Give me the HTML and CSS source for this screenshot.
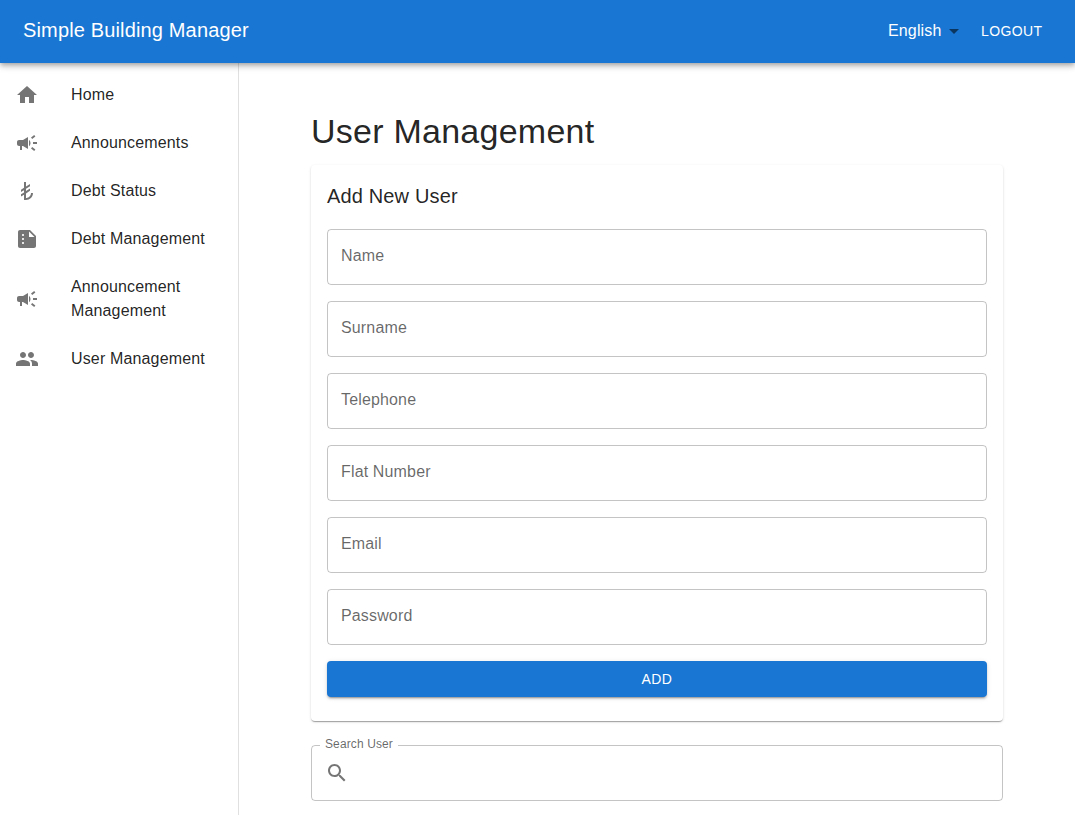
FILE: index.html
```html
<!DOCTYPE html>
<html lang="en">
<head>
<meta charset="utf-8">
<title>Simple Building Manager</title>
<link rel="stylesheet" href="styles.css">
</head>
<body>
<header class="appbar">
  <div class="brand">Simple Building Manager</div>
  <div class="language"><span class="language-label">English</span><svg class="icon arrow" viewBox="0 0 24 24"><path d="M7 10l5 5 5-5z"/></svg></div>
  <button class="logout">LOGOUT</button>
</header>
<div class="layout">
  <nav class="sidebar">
    <a class="item"><svg class="icon" viewBox="0 0 24 24"><path d="M10 20v-6h4v6h5v-8h3L12 3 2 12h3v8z"/></svg><span class="label">Home</span></a>
    <a class="item"><svg class="icon" viewBox="0 0 24 24"><path d="M18 11v2h4v-2h-4zM16 17.61c.96.71 2.21 1.65 3.2 2.39.4-.53.8-1.07 1.2-1.6-.99-.74-2.24-1.68-3.2-2.4-.4.54-.8 1.08-1.2 1.61zM20.4 5.6c-.4-.53-.8-1.07-1.2-1.6-.99.74-2.24 1.68-3.2 2.4.4.53.8 1.07 1.2 1.6.96-.72 2.21-1.65 3.2-2.4zM4 9c-1.1 0-2 .9-2 2v2c0 1.100.9 2 2 2h1v4h2v-4h1l5 3V6L8 9H4zM15.500 12c0-1.330-.580-2.530-1.500-3.350v6.690c.920-.810 1.500-2.010 1.500-3.340z"/></svg><span class="label">Announcements</span></a>
    <a class="item"><svg class="icon" viewBox="0 0 24 24"><path d="M9 8.760V3h2v4.510L15 5v2.360l-4 2.510v2.150l4-2.510v2.360l-4 2.510V19c2.760 0 5-2.240 5-5h2c0 3.870-3.130 7-7 7H9v-5.260l-3 1.880v-2.360l3-1.880v-2.250l-3 1.880v-2.360z"/></svg><span class="label">Debt Status</span></a>
    <a class="item"><svg class="icon" viewBox="0 0 24 24"><path d="M15 3H5c-1.100 0-1.990.9-1.990 2L3 19c0 1.100.890 2 1.990 2H19c1.100 0 2-.9 2-2V9l-6-6zM8 17c-.550 0-1-.450-1-1s.450-1 1-1 1 .450 1 1-.450 1-1 1zm0-4c-.550 0-1-.450-1-1s.450-1 1-1 1 .450 1 1-.450 1-1 1zm0-4c-.550 0-1-.450-1-1s.450-1 1-1 1 .450 1 1-.450 1-1 1zm6 1V4.500l5.500 5.500H14z"/></svg><span class="label">Debt Management</span></a>
    <a class="item"><svg class="icon" viewBox="0 0 24 24"><path d="M18 11v2h4v-2h-4zM16 17.61c.96.71 2.21 1.65 3.2 2.39.4-.53.8-1.07 1.2-1.6-.99-.74-2.24-1.68-3.2-2.4-.4.54-.8 1.08-1.2 1.61zM20.4 5.6c-.4-.53-.8-1.07-1.2-1.6-.99.74-2.24 1.68-3.2 2.4.4.53.8 1.07 1.2 1.6.96-.72 2.21-1.65 3.2-2.4zM4 9c-1.1 0-2 .9-2 2v2c0 1.100.9 2 2 2h1v4h2v-4h1l5 3V6L8 9H4zM15.500 12c0-1.330-.580-2.530-1.500-3.350v6.690c.920-.810 1.500-2.010 1.500-3.340z"/></svg><span class="label">Announcement Management</span></a>
    <a class="item"><svg class="icon" viewBox="0 0 24 24"><path d="M16 11c1.660 0 2.990-1.340 2.990-3S17.660 5 16 5c-1.660 0-3 1.340-3 3s1.340 3 3 3zm-8 0c1.660 0 2.990-1.340 2.990-3S9.660 5 8 5C6.340 5 5 6.340 5 8s1.340 3 3 3zm0 2c-2.330 0-7 1.170-7 3.500V19h14v-2.500c0-2.330-4.670-3.500-7-3.500zm8 0c-.290 0-.620.020-.970.050 1.160.840 1.970 1.970 1.970 3.450V19h6v-2.500c0-2.330-4.670-3.500-7-3.500z"/></svg><span class="label">User Management</span></a>
  </nav>
  <main class="content">
    <h1 class="title">User Management</h1>
    <section class="card">
      <h2 class="subtitle">Add New User</h2>
      <div class="field">Name</div>
      <div class="field">Surname</div>
      <div class="field">Telephone</div>
      <div class="field">Flat Number</div>
      <div class="field">Email</div>
      <div class="field">Password</div>
      <button class="add">ADD</button>
    </section>
    <fieldset class="search">
      <legend class="legend">Search User</legend>
      <svg class="icon" viewBox="0 0 24 24"><path d="M15.500 14h-.790l-.280-.270C15.410 12.590 16 11.110 16 9.500 16 5.910 13.090 3 9.500 3S3 5.910 3 9.500 5.910 16 9.500 16c1.610 0 3.090-.590 4.230-1.570l.270.280v.790l5 4.990L20.490 19l-4.990-5zm-6 0C7.010 14 5 11.990 5 9.500S7.010 5 9.500 5 14 7.010 14 9.500 11.990 14 9.500 14z"/></svg>
    </fieldset>
  </main>
</div>
</body>
</html>
```
FILE: styles.css
```css
* { box-sizing: border-box; }
body {
  margin: 0;
  height: 815px;
  overflow: hidden;
  display: flex;
  flex-direction: column;
  background: #fff;
  color: rgba(0, 0, 0, 0.87);
  font: 400 16px/24px "Liberation Sans", Arial, sans-serif;
  letter-spacing: 0.15px;
}
.icon { width: 24px; height: 24px; flex: none; fill: rgba(0, 0, 0, 0.54); }
.appbar {
  position: relative;
  flex: none;
  height: 63px;
  padding: 0 24px 2px 23px;
  display: flex;
  align-items: center;
  background: #1976d2;
  color: #fff;
  box-shadow: 0 2px 4px -1px rgba(0,0,0,.2), 0 4px 5px rgba(0,0,0,.14), 0 1px 10px rgba(0,0,0,.12);
}
.brand { flex: 1; padding-bottom: 1px; font-size: 20px; line-height: 32px; }
.language { display: flex; align-items: center; }
.language-label { margin-right: 0.5px; }
.arrow { margin-right: 7px; }
.logout {
  width: 78px;
  padding: 0 8px;
  border: 0;
  background: none;
  color: inherit;
  font: 14px/24px "Liberation Sans", Arial, sans-serif;
  letter-spacing: 0.4px;
  text-align: left;
}
.layout { flex: 1; display: flex; }
.sidebar { width: 239px; padding-top: 8px; border-right: 1px solid rgba(0,0,0,.12); }
.item { display: flex; align-items: center; gap: 32px; padding: 12px 15px; }
.content { flex: 1; padding: 47px 72px 14px; }
.title { margin: 0 0 13px; font-size: 34px; font-weight: 400; line-height: 42px; letter-spacing: 0.25px; }
.card {
  display: flex;
  flex-direction: column;
  gap: 16px;
  padding: 15px 16px 24px;
  margin-bottom: 24px;
  border-radius: 4px;
  box-shadow: 0 2px 1px -1px rgba(0,0,0,.2), 0 1px 1px rgba(0,0,0,.14), 0 1px 3px rgba(0,0,0,.12);
}
.subtitle { margin: 0 0 1px; font-size: 20px; font-weight: 400; line-height: 32px; }
.field {
  height: 56px;
  padding: 14px 13px;
  border: 1px solid rgba(0,0,0,.23);
  border-radius: 4px;
  color: rgba(0,0,0,.6);
}
.add {
  height: 36px;
  border: 0;
  border-radius: 4px;
  background: #1976d2;
  color: #fff;
  font: 14px/24px "Liberation Sans", Arial, sans-serif;
  letter-spacing: 0.4px;
  box-shadow: 0 3px 1px -2px rgba(0,0,0,.2), 0 2px 2px rgba(0,0,0,.14), 0 1px 5px rgba(0,0,0,.12);
}
.search {
  position: relative;
  height: 56px;
  margin: 0;
  padding: 15px 13px;
  border: 1px solid rgba(0,0,0,.23);
  border-radius: 4px;
}
.legend {
  position: absolute;
  top: -14px;
  left: 8px;
  padding: 0 5px;
  background: #fff;
  color: rgba(0,0,0,.6);
  font-size: 12px;
  letter-spacing: 0.11px;
}
```
